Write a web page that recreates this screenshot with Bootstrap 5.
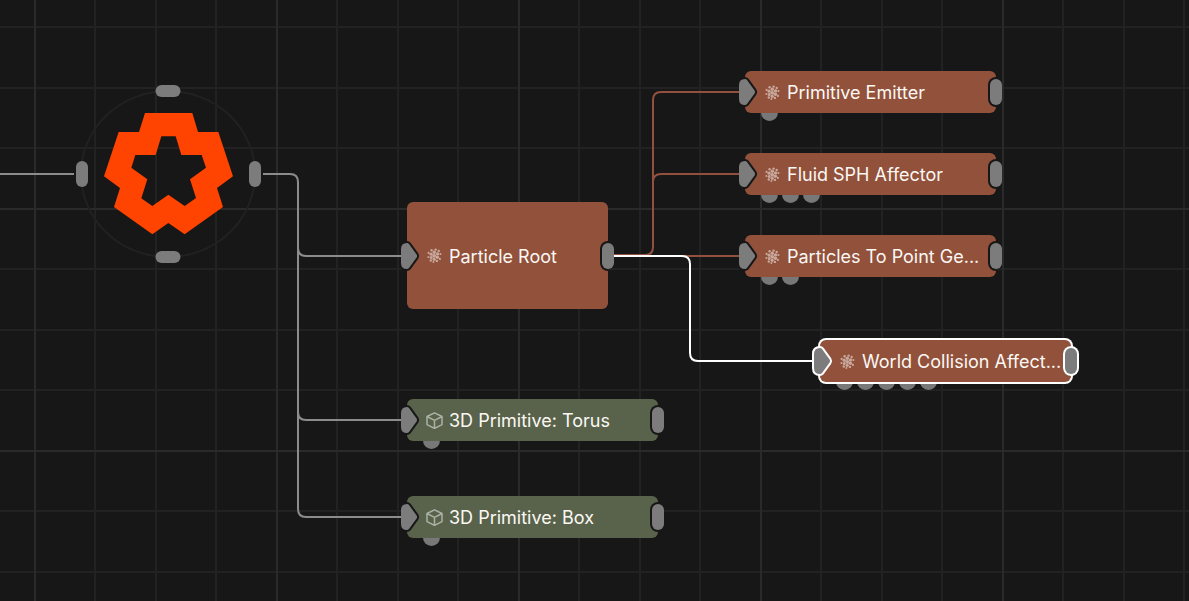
<!DOCTYPE html>
<html lang="en" data-bs-theme="dark">
<head>
<meta charset="utf-8">
<meta name="viewport" content="width=device-width, initial-scale=1">
<title>Node graph</title>
<link href="https://cdn.jsdelivr.net/npm/bootstrap@5.3.0/dist/css/bootstrap.min.css" rel="stylesheet">
<style>
  :root { --canvas: #171717; --port: #7c7c7c; --particle: #92513b; --mesh: #59634b; }
  body { background: var(--canvas); font-family: Inter, "Liberation Sans", sans-serif; font-size: 18px; line-height: 24px; }
  .graph { min-height: 100vh; }
  .wires { left: 0; top: 0; }
  .wires path { fill: none; stroke: #8c8c8c; stroke-width: 2; }
  .wires .to-particle { stroke: #92513f; }
  .wires .to-selected { stroke: #fff; }
  .wires .grid-minor { stroke: #222; }
  .wires .grid-major { stroke: #2a2a2a; }

  /* nodes sit at free positions on the canvas */
  .node { width: 251px; height: 42px; padding: 0 6px 0 19px; gap: 6px; color: #fbf8f4; z-index: 1; isolation: isolate; }
  .node-title { padding-top: 2px; }
  .node-face { inset: 0; z-index: -1; border-radius: 6px; background: var(--fill); overflow: hidden; }
  .node-face::after { content: ""; position: absolute; right: -8px; top: 50%; width: 16px; height: 30px; margin-top: -15px; border-radius: 8px; background: var(--canvas); }
  .particle { --fill: var(--particle); }
  .mesh { --fill: var(--mesh); }
  .selected .node-face { box-shadow: 0 0 0 2px #fff; }
  .node-icon { width: 17px; height: 17px; opacity: .5; }

  .port-in { left: -6px; top: 50%; width: 22px; height: 32px; margin-top: -16px; overflow: hidden; fill: var(--port); stroke: var(--canvas); stroke-width: 4px; paint-order: stroke; stroke-linejoin: round; }
  .port-out { right: -6px; top: 50%; width: 12px; height: 26px; margin-top: -13px; border-radius: 6px; background: var(--port); }
  .selected .port-in { stroke: #fff; overflow: visible; }
  .selected .port-out { box-shadow: 0 0 0 2px #fff; }
  .inputs { left: 16px; bottom: -8px; gap: 4px; z-index: -2; }
  .inputs i { width: 17px; height: 17px; border-radius: 50%; background: #787878; }

  #root { left: 407px; top: 202px; width: 201px; height: 107px; }
  #emitter { left: 745px; top: 71px; }
  #fluid { left: 745px; top: 153px; }
  #points { left: 745px; top: 235px; }
  #collision { left: 820px; top: 340px; }
  #torus { left: 407px; top: 399px; }
  #box { left: 407px; top: 496px; }
  #scene { left: 75px; top: 84px; }
</style>
</head>
<body>
<main class="graph position-relative overflow-hidden">

  <svg class="wires position-absolute w-100 h-100" aria-hidden="true">
    <defs>
      <pattern id="grid" x="34" y="-34" width="242" height="242" patternUnits="userSpaceOnUse">
        <path class="grid-minor" d="M61 0V242M122 0V242M182 0V242M0 61H242M0 122H242M0 182H242"/>
        <path class="grid-major" d="M1 0V242M0 1H242"/>
      </pattern>
    </defs>
    <rect width="100%" height="100%" fill="url(#grid)"/>
    <path d="M0 174H74"/>
    <path d="M263 174H290Q298 174 298 182V509Q298 517 306 517H402"/>
    <path d="M298 248Q298 256 306 256H402"/>
    <path d="M298 412Q298 420 306 420H402"/>
    <path class="to-particle" d="M614 255H645Q653 255 653 247V100Q653 92 661 92H740"/>
    <path class="to-particle" d="M653 182Q653 174 661 174H740"/>
    <path class="to-particle" d="M614 256H740"/>
    <path class="to-selected" d="M613 256H682Q690 256 690 264V353Q690 361 698 361H814"/>
  </svg>

  <svg id="scene" class="position-absolute" width="188" height="180" viewBox="75 84 188 180" role="img" aria-label="Scene root">
    <ellipse cx="168" cy="174" rx="87" ry="83" fill="none" stroke="#212121" stroke-width="2"/>
    <g fill="#7c7c7c">
      <rect x="155.500" y="85" width="25" height="12" rx="6"/>
      <rect x="155.500" y="251" width="25" height="12" rx="6"/>
      <rect x="76" y="161" width="12" height="26" rx="6"/>
      <rect x="249" y="161" width="12" height="26" rx="6"/>
    </g>
    <path transform="translate(60 70) scale(.33333)" fill="#ff4300" fill-rule="evenodd" d="M255 129H397L414 186H475L519 319L471 354L489 411L374 493L325 459L277 493L162 411L180 354L132 319L176 186H237ZM304 199L287 255H226L214 293L262 328L244 385L277 408L325 374L374 408L408 384L390 328L438 293L425 255H364L347 199Z"/>
  </svg>

  <svg class="d-none" aria-hidden="true">
    <symbol id="i-particle" viewBox="0 0 17 17">
      <g fill="#fff">
        <circle cx="8.200" cy="8.800" r="1.900"/><circle cx="8.300" cy="5.300" r="1.700"/><circle cx="11.500" cy="6.900" r="1.700"/><circle cx="11.400" cy="10.300" r="1.700"/><circle cx="8.200" cy="12.300" r="1.600"/><circle cx="5.200" cy="10.400" r="1.500"/><circle cx="5.100" cy="7.200" r="1.600"/>
        <circle cx="5.600" cy="3.300" r="1.200"/><circle cx="9.600" cy="2.600" r="1.200"/><circle cx="12.700" cy="4" r="1.200"/><circle cx="14.400" cy="7" r="1.100"/><circle cx="13.900" cy="11.900" r="1.100"/><circle cx="10.900" cy="13.900" r="1.200"/><circle cx="7.400" cy="15" r="1"/><circle cx="4.800" cy="13.500" r="1.200"/><circle cx="2.400" cy="9.900" r="1"/><circle cx="2.600" cy="5.900" r="1.100"/>
      </g>
    </symbol>
    <symbol id="i-cube" viewBox="0 0 17 17">
      <path d="M8.500 .8L16 4.500V12.600L8.500 16.400L1 12.600V4.500ZM1 4.500L8.500 8.300L16 4.500M8.500 8.300V16.400" fill="none" stroke="#fff" stroke-width="1.500" stroke-linejoin="round"/>
    </symbol>
    <g id="i-port">
      <path d="M6 3Q0 3 0 9V23Q0 29 6 29Q7.200 29 8 28L15.600 17.500Q16.600 16 15.600 14.500L8 4Q7.200 3 6 3Z"/>
    </g>
  </svg>

  <div id="root" class="node particle position-absolute d-flex align-items-center">
    <span class="node-face position-absolute"></span>
    <svg class="port-in position-absolute"><use href="#i-port"/></svg>
    <svg class="node-icon flex-shrink-0"><use href="#i-particle"/></svg>
    <span class="node-title text-truncate">Particle Root</span>
    <span class="port-out position-absolute"></span>
  </div>

  <div id="emitter" class="node particle position-absolute d-flex align-items-center">
    <span class="node-face position-absolute"></span>
    <span class="inputs position-absolute d-flex"><i></i></span>
    <svg class="port-in position-absolute"><use href="#i-port"/></svg>
    <svg class="node-icon flex-shrink-0"><use href="#i-particle"/></svg>
    <span class="node-title text-truncate">Primitive Emitter</span>
    <span class="port-out position-absolute"></span>
  </div>

  <div id="fluid" class="node particle position-absolute d-flex align-items-center">
    <span class="node-face position-absolute"></span>
    <span class="inputs position-absolute d-flex"><i></i><i></i><i></i></span>
    <svg class="port-in position-absolute"><use href="#i-port"/></svg>
    <svg class="node-icon flex-shrink-0"><use href="#i-particle"/></svg>
    <span class="node-title text-truncate">Fluid SPH Affector</span>
    <span class="port-out position-absolute"></span>
  </div>

  <div id="points" class="node particle position-absolute d-flex align-items-center">
    <span class="node-face position-absolute"></span>
    <span class="inputs position-absolute d-flex"><i></i><i></i></span>
    <svg class="port-in position-absolute"><use href="#i-port"/></svg>
    <svg class="node-icon flex-shrink-0"><use href="#i-particle"/></svg>
    <span class="node-title text-truncate">Particles To Point Ge...</span>
    <span class="port-out position-absolute"></span>
  </div>

  <div id="collision" class="node particle selected position-absolute d-flex align-items-center">
    <span class="node-face position-absolute"></span>
    <span class="inputs position-absolute d-flex"><i></i><i></i><i></i><i></i><i></i></span>
    <svg class="port-in position-absolute"><use href="#i-port"/></svg>
    <svg class="node-icon flex-shrink-0"><use href="#i-particle"/></svg>
    <span class="node-title text-truncate">World Collision Affect...</span>
    <span class="port-out position-absolute"></span>
  </div>

  <div id="torus" class="node mesh position-absolute d-flex align-items-center">
    <span class="node-face position-absolute"></span>
    <span class="inputs position-absolute d-flex"><i></i></span>
    <svg class="port-in position-absolute"><use href="#i-port"/></svg>
    <svg class="node-icon flex-shrink-0"><use href="#i-cube"/></svg>
    <span class="node-title text-truncate">3D Primitive: Torus</span>
    <span class="port-out position-absolute"></span>
  </div>

  <div id="box" class="node mesh position-absolute d-flex align-items-center">
    <span class="node-face position-absolute"></span>
    <span class="inputs position-absolute d-flex"><i></i></span>
    <svg class="port-in position-absolute"><use href="#i-port"/></svg>
    <svg class="node-icon flex-shrink-0"><use href="#i-cube"/></svg>
    <span class="node-title text-truncate">3D Primitive: Box</span>
    <span class="port-out position-absolute"></span>
  </div>
</main>
<script src="https://cdn.jsdelivr.net/npm/bootstrap@5.3.0/dist/js/bootstrap.bundle.min.js"></script>
</body>
</html>
